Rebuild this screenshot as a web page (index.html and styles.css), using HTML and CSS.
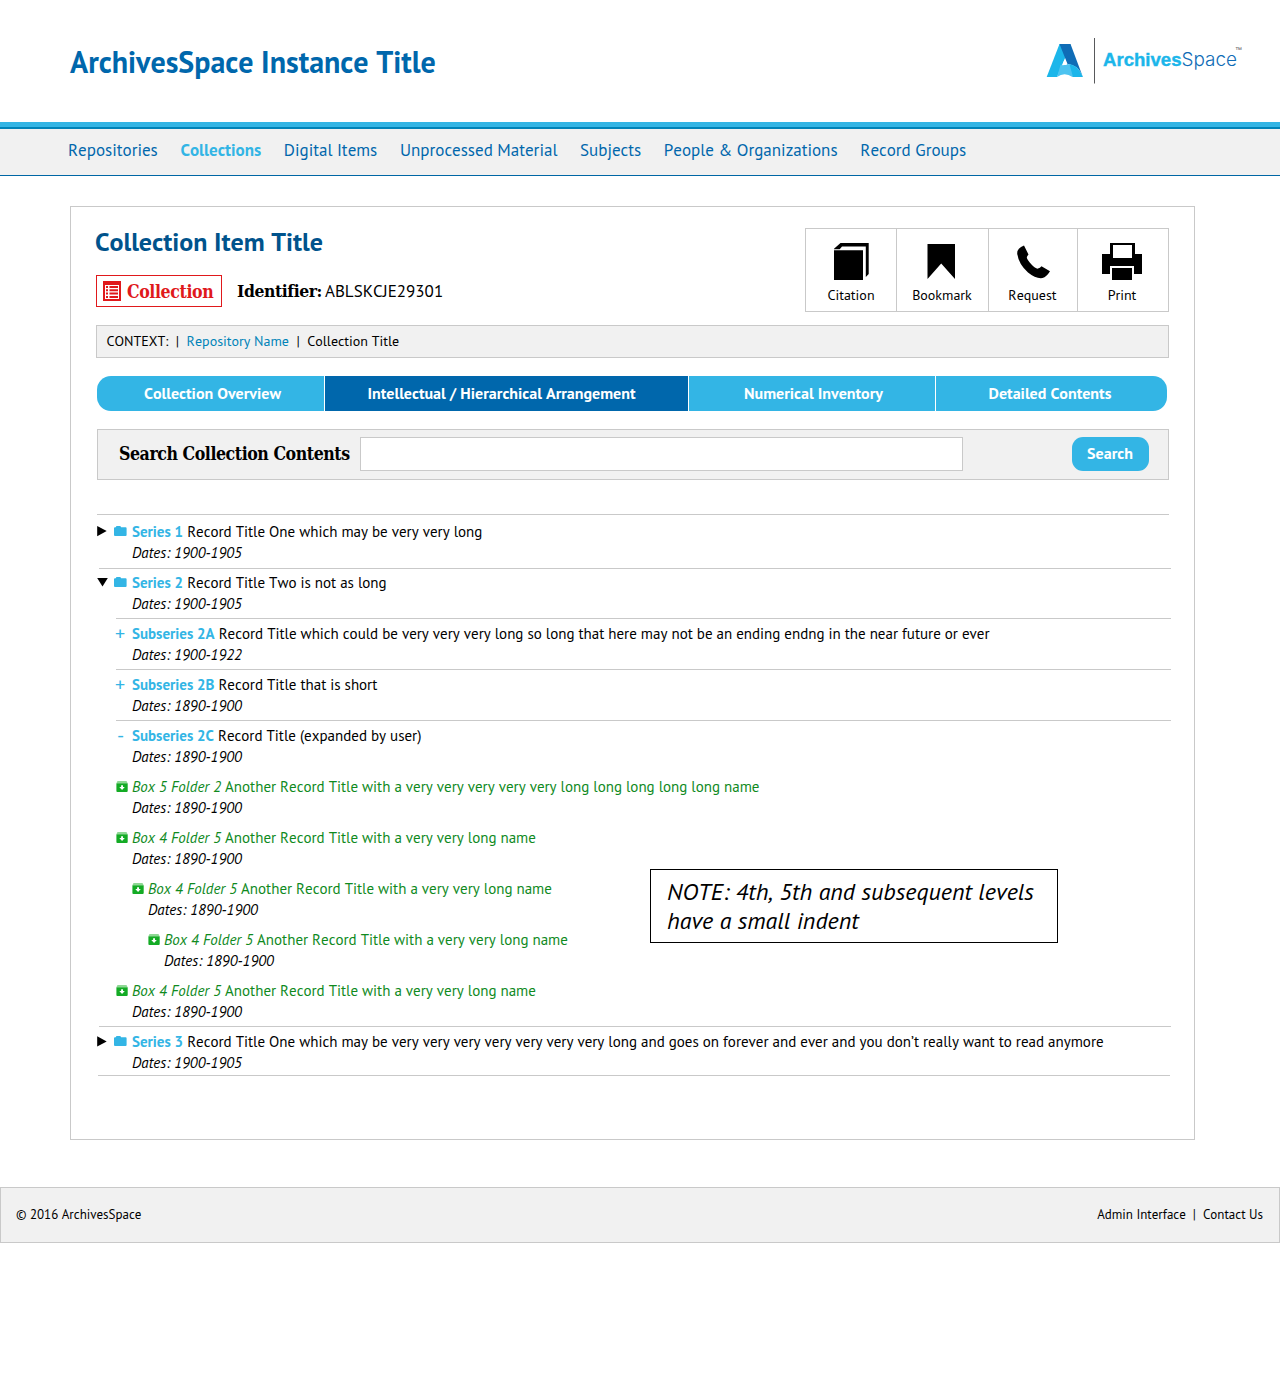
FILE: index.html
```html
<!DOCTYPE html>
<html lang="en">
<head>
<meta charset="utf-8">
<title>ArchivesSpace Instance Title</title>
<link rel="stylesheet" href="styles.css">
</head>
<body>
<svg class="defs" aria-hidden="true">
  <symbol id="folder" viewBox="0 0 13 10"><path fill="#33b5e5" d="M0 2.2Q0 1.2 1 1.2H1.8Q2 0 3 0H5.800Q6.800 0 7.100 1.200H11.600Q12.600 1.200 12.600 2.200V9Q12.600 10 11.600 10H1Q0 10 0 9Z"/></symbol>
  <symbol id="box" viewBox="0 0 12 12"><path fill="#8ed894" d="M1.500 0H10.500L11.500 2H.5Z"/><path fill="#14ab25" d="M.4 2.300H11.700V10Q11.700 11 10.700 11H1.400Q.4 11 .4 10Z"/><path fill="#fff" d="M5.100 4.200H7V6.100H8.800L6.050 9.100L3.300 6.100H5.100Z"/></symbol>
</svg>

<header class="header">
  <h1 class="site-title">ArchivesSpace Instance Title</h1>
  <svg class="logo" viewBox="0 0 200 50" role="img" aria-label="ArchivesSpace">
    <path fill="#1cb6ea" d="M19.500 9H30.500L24.500 24.500L17 42H6.700Z"/>
    <path fill="#0f6cb6" d="M19.500 9H30.500L42.700 41.500Q39 32 30 29.500L27.500 29Z"/>
    <path fill="#4cc3f0" d="M20.500 30Q30 27.500 36.500 32Q40.500 35.500 42.700 42H32.500Q24.500 36.500 17 42Z"/>
    <path fill="#1cb6ea" d="M29.500 29.200Q38.500 31 42.800 42H33Z"/>
    <path fill="#fff" d="M24.500 24.300L27 30.100Q24 29.700 22.100 30.300Z"/>
    <path fill="#58595b" d="M54 3H55V48.500H54Z"/>
    <text class="logo-bold" x="63" y="31" textLength="78.500" lengthAdjust="spacingAndGlyphs">Archives</text>
    <text class="logo-thin" x="141.500" y="31" textLength="55.500" lengthAdjust="spacingAndGlyphs">Space</text>
    <text class="logo-tm" x="195" y="17">™</text>
  </svg>
</header>

<nav class="nav">
  <a>Repositories</a><a class="current">Collections</a><a>Digital Items</a><a>Unprocessed Material</a><a>Subjects</a><a>People &amp; Organizations</a><a>Record Groups</a>
</nav>

<main class="panel">
  <div class="top">
    <div class="heading">
      <h2 class="item-title">Collection Item Title</h2>
      <div class="meta">
        <span class="badge">
          <svg class="badge-icon" viewBox="0 0 18 20"><path fill="#e0191c" fill-rule="evenodd" d="M0 0H18V20H0ZM2 4V18H16V4Z"/><path fill="#e0191c" d="M3 5H5V7H3ZM6.500 5H15V7H6.500ZM3 8.300H5V10.300H3ZM6.500 8.300H15V10.300H6.500ZM3 11.600H5V13.600H3ZM6.500 11.600H15V13.600H6.500ZM3 15H5V17H3ZM6.500 15H15V17H6.500Z"/></svg>
          <span class="slab badge-text">Collection</span>
        </span>
        <span class="slab ident-label">Identifier:</span>
        <span class="ident">ABLSKCJE29301</span>
      </div>
    </div>
    <div class="actions">
      <a class="action"><svg viewBox="0 0 40 40"><path d="M3 9.300H32V39H3ZM3 8.300V7.700L9.500 2H37.700V33L34.800 36V5.600H11L8.700 8.300Z"/></svg>Citation</a>
      <a class="action"><svg viewBox="0 0 40 40"><path d="M5.500 3H33V38L19.200 22.500L5.500 38Z"/></svg>Bookmark</a>
      <a class="action"><svg viewBox="0 0 40 40"><path d="M11 4.500Q4 7 4.200 12.500Q5.500 23 15 31.500Q23 38 29.500 37Q33.500 36 37 30.300L28.500 25.200Q27 27 25 27.600Q22.500 28 18.500 23.500Q14 18.500 13.800 16.500Q14 15 15.500 13.500Z"/></svg>Request</a>
      <a class="action"><svg viewBox="0 0 40 40"><path d="M8 2H33V13H40V33H32V25H8V33H0V13H8ZM11 4V17H30V4ZM10 27H30V39H10Z" fill-rule="evenodd"/></svg>Print</a>
    </div>
  </div>

  <div class="context"><span>CONTEXT:</span><span>|</span><a>Repository Name</a><span>|</span><span>Collection Title</span></div>

  <div class="tabs">
    <a class="tab">Collection Overview</a>
    <a class="tab active">Intellectual / Hierarchical Arrangement</a>
    <a class="tab">Numerical Inventory</a>
    <a class="tab">Detailed Contents</a>
  </div>

  <form class="search">
    <label class="slab search-label" for="q">Search Collection Contents</label>
    <input class="search-input" id="q" type="text">
    <button class="search-button" type="button">Search</button>
  </form>

  <div class="tree">
    <div class="row first"><svg class="arrow" viewBox="0 0 11 11"><path d="M.2 0L9.700 5.100L.2 10.200Z"/></svg><svg class="folder"><use href="#folder"/></svg><div><p><b>Series 1</b> Record Title One which may be very very long</p><p class="dates">Dates: 1900-1905</p></div></div>
    <div class="row open"><svg class="arrow" viewBox="0 0 11 11"><path d="M.2 1H10.800L5.500 9.500Z"/></svg><svg class="folder"><use href="#folder"/></svg><div><p><b>Series 2</b> Record Title Two is not as long</p><p class="dates">Dates: 1900-1905</p></div></div>
    <div class="row sub"><span class="sign">+</span><div><p><b>Subseries 2A</b> Record Title which could be very very very long so long that here may not be an ending endng in the near future or ever</p><p class="dates">Dates: 1900-1922</p></div></div>
    <div class="row sub"><span class="sign">+</span><div><p><b>Subseries 2B</b> Record Title that is short</p><p class="dates">Dates: 1890-1900</p></div></div>
    <div class="row sub"><span class="sign minus">-</span><div><p><b>Subseries 2C</b> Record Title (expanded by user)</p><p class="dates">Dates: 1890-1900</p></div></div>
    <div class="row leaf"><svg class="box"><use href="#box"/></svg><div><p class="green"><i>Box 5 Folder 2</i> Another Record Title with a very very very very very long long long long long name</p><p class="dates">Dates: 1890-1900</p></div></div>
    <div class="row leaf"><svg class="box"><use href="#box"/></svg><div><p class="green"><i>Box 4 Folder 5</i> Another Record Title with a very very long name</p><p class="dates">Dates: 1890-1900</p></div></div>
    <div class="row leaf level-4"><svg class="box"><use href="#box"/></svg><div><p class="green"><i>Box 4 Folder 5</i> Another Record Title with a very very long name</p><p class="dates">Dates: 1890-1900</p></div></div>
    <div class="row leaf level-5"><svg class="box"><use href="#box"/></svg><div><p class="green"><i>Box 4 Folder 5</i> Another Record Title with a very very long name</p><p class="dates">Dates: 1890-1900</p></div></div>
    <div class="row leaf"><svg class="box"><use href="#box"/></svg><div><p class="green"><i>Box 4 Folder 5</i> Another Record Title with a very very long name</p><p class="dates">Dates: 1890-1900</p></div></div>
    <div class="row last"><svg class="arrow" viewBox="0 0 11 11"><path d="M.2 .3L9.700 5.400L.2 10.500Z"/></svg><svg class="folder"><use href="#folder"/></svg><div><p><b>Series 3</b> Record Title One which may be very very very very very very very long and goes on forever and ever and you don’t really want to read anymore</p><p class="dates">Dates: 1900-1905</p></div></div>
    <div class="end"></div>
  </div>

  <aside class="note">NOTE: 4th, 5th and subsequent levels have a small indent</aside>
</main>

<footer class="footer">
  <span>© 2016 ArchivesSpace</span>
  <span class="footer-links"><a>Admin Interface</a><span>|</span><a>Contact Us</a></span>
</footer>
</body>
</html>
```
FILE: styles.css
```css
* { box-sizing: border-box; }
body { margin: 0; background: #fff; color: #000; font: 15px/21px "PT Sans", "Noto Sans", sans-serif; font-kerning: none; }
h1, h2, p { margin: 0; }
.defs { display: none; }
svg { display: block; flex: none; }
.slab { font-family: "Roboto Slab", "DejaVu Serif Condensed", "DejaVu Serif", serif; font-stretch: condensed; font-weight: bold; }

.header { display: flex; justify-content: space-between; height: 122px; padding: 35px 40px 0 70px; }
.site-title { margin-top: 7px; font-size: 30px; line-height: 40px; color: #0067ac; }
.logo { width: 200px; height: 50px; overflow: visible; }
.logo-bold { font: bold 18.5px "Liberation Sans", sans-serif; fill: #1cb6ea; stroke: #1cb6ea; stroke-width: .4; }
.logo-thin { font: 300 18.5px Inter, sans-serif; fill: #0f6cb6; }
.logo-tm { font: 7px "Liberation Sans", sans-serif; fill: #58595b; }

.nav { display: flex; gap: 22.7px; height: 54px; padding: 11px 68px 0; border-top: 5px solid #33b5e5; border-bottom: 1px solid #0067a5; background: #f1f1f1; box-shadow: inset 0 2px #0083b8; font-size: 17px; color: #0067ac; }
.nav a { line-height: 24px; }
.nav .current { font-weight: bold; color: #33b5e5; }

.panel { position: relative; width: 1125px; height: 934px; margin: 30px 0 47px 70px; padding: 21px 25px 0; border: 1px solid #c9c9c9; }
.top { display: flex; justify-content: space-between; height: 97px; }
.item-title { margin: -3px 0 0 -1px; font-size: 26px; line-height: 34px; color: #00538c; }
.meta { display: flex; align-items: center; margin-top: 16px; height: 32px; }
.badge { display: flex; align-items: center; width: 126px; height: 32px; padding-left: 6px; border: 1px solid #e0191c; color: #e0191c; }
.badge-icon { width: 18px; height: 20px; margin-right: 6px; }
.badge-text { font-size: 17.6px; letter-spacing: -.4px; }
.ident-label { margin-left: 15px; width: 88px; font-size: 17.4px; letter-spacing: -.4px; white-space: nowrap; }
.ident { font-size: 17px; }

.actions { display: grid; grid-template-columns: 90px 92px 89px 91px; width: 364px; height: 84px; border: 1px solid #c9c9c9; }
.action { display: flex; flex-direction: column; align-items: center; padding: 12px 1px 0 0; font-size: 14px; line-height: 20px; }
.action:first-child { padding-right: 0; }
.action:last-child { padding-right: 2px; }
.action + .action { border-left: 1px solid #c9c9c9; }
.action svg { width: 40px; height: 40px; margin-bottom: 4px; }

.context { display: flex; gap: 7.5px; height: 33px; padding-left: 9.5px; border: 1px solid #c9c9c9; background: #f1f1f1; font-size: 14px; line-height: 31px; width: 1073px; }
.context a { color: #0083b8; }

.tabs { display: grid; grid-template-columns: 227px 363px 246px 231px; gap: 1px; width: 1070px; margin: 18px 0 0 1px; border-radius: 14px; overflow: hidden; }
.tab { height: 34.5px; background: #33b5e5; color: #fff; font-size: 16px; font-weight: bold; line-height: 34px; text-align: center; }
.tab.active { background: #0067ac; }
.tab:nth-child(1) { padding-left: 4px; }
.tab:nth-child(2) { padding-right: 10px; }
.tab:nth-child(3) { padding-left: 3px; }
.tab:nth-child(4) { padding-right: 3px; }

.search { display: flex; width: 1072px; height: 51px; margin: 18.5px 0 34px 1px; padding: 7px 19.5px 0 21px; border: 1px solid #c9c9c9; background: #f1f1f1; }
.search-label { width: 241px; font-size: 17.6px; letter-spacing: -.45px; line-height: 34px; white-space: nowrap; }
.search-input { width: 603px; height: 34px; border: 1px solid #c9c9c9; background: #fff; }
.search-button { width: 77px; height: 33.5px; margin-left: auto; padding: 0 0 1px; border: 0; border-radius: 11px; background: #33b5e5; color: #fff; font: bold 16px/31px "PT Sans", "Noto Sans", sans-serif; font-kerning: none; }

.tree { width: 1074px; margin-left: 1px; }
.row { display: flex; height: 51px; margin-left: 19px; padding-top: 4px; border-top: 1px solid #c9c9c9; white-space: nowrap; }
.row b { color: #33b5e5; }
.dates { font-style: italic; }
.green { color: #0f8a1e; }
.first { height: 54px; margin: 0 2px 0 0; padding-top: 6px; }
.open { height: 50px; margin-left: 2px; padding-top: 3px; }
.leaf { border-color: transparent; }
.level-4 { margin-left: 35px; }
.level-5 { margin-left: 51px; }
.last { height: 49px; margin-left: 2px; }
.end { height: 1px; margin: 0 1px; background: #c9c9c9; }
.arrow { width: 11px; height: 11px; margin: 5px 6px 0 0; }
.open .arrow, .last .arrow { margin-left: -2px; }
.folder { width: 13px; height: 10px; margin: 5px 5px 0 0; }
.box { width: 12px; height: 12px; margin: 5px 4px 0 0; }
.sign { width: 16px; margin-left: -1px; padding-right: 1px; flex: 0 0 17px; font-size: 20px; color: #33b5e5; }
.minus { padding-left: 2px; }

.note { position: absolute; left: 579px; top: 662px; width: 408px; height: 74px; padding: 7px 16px; border: 1px solid #000; background: #fff; font-size: 24px; font-style: italic; line-height: 29px; }

.footer { display: flex; justify-content: space-between; height: 56px; padding: 0 16px 0 15px; border: 1px solid #c9c9c9; background: #f1f1f1; font-size: 13px; line-height: 53px; }
.footer-links { display: flex; gap: 7px; }
```
